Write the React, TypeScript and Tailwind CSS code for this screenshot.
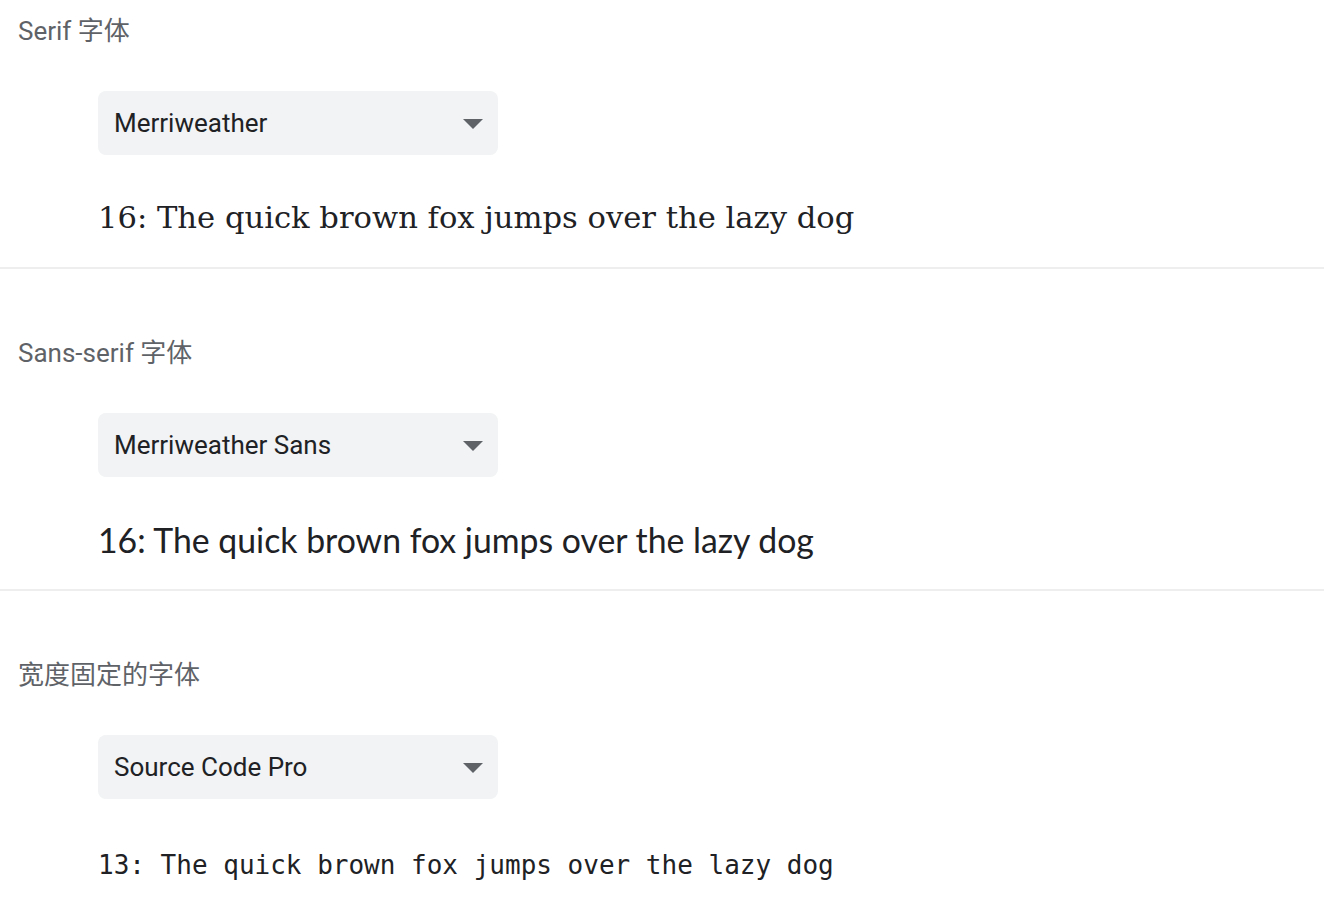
import React from 'react';

interface FontSectionProps {
  label: string;
  value: string;
  sample: string;
  sampleClass: string;
  first?: boolean;
  last?: boolean;
}

const Dropdown: React.FC<{ value: string }> = ({ value }) => (
  <div className="ml-[98px] w-[400px] h-[64px] rounded-lg bg-[#f1f3f4] flex items-center justify-between pl-[16px] pr-[15px]">
    <span className="text-[26px] text-[#202124] font-['Roboto',sans-serif]">{value}</span>
    <svg width="20" height="10" viewBox="0 0 20 10" className="mt-[1px]">
      <path d="M0 0 L20 0 L10 10 Z" fill="#5f6368" />
    </svg>
  </div>
);

const FontSection: React.FC<FontSectionProps> = ({ label, value, sample, sampleClass, first, last }) => (
  <div className={first ? '' : 'pt-[53px]'}>
    <div className="h-[62px] flex items-center pl-[18px] text-[26px] text-[#5f6368] font-['Roboto','Noto_Sans_CJK_SC',sans-serif]">
      {label}
    </div>
    <div className="mt-[29px]">
      <Dropdown value={value} />
    </div>
    <div className={`ml-[98px] h-[40px] flex items-center text-[#202124] whitespace-nowrap ${sampleClass}`}>
      {sample}
    </div>
    {!last && <div className="mt-[29px] h-[2px] bg-[#eeeeee]" />}
  </div>
);

export default function App() {
  return (
    <div className="w-[1324px] h-[908px] bg-white overflow-hidden">
      <FontSection
        first
        label="Serif 字体"
        value="Merriweather"
        sample="16: The quick brown fox jumps over the lazy dog"
        sampleClass="mt-[43px] font-['DejaVu_Serif',serif] text-[30.6px]"
      />
      <FontSection
        label="Sans-serif 字体"
        value="Merriweather Sans"
        sample="16: The quick brown fox jumps over the lazy dog"
        sampleClass="mt-[43px] font-['Lato',sans-serif] text-[33.8px]"
      />
      <FontSection
        last
        label="宽度固定的字体"
        value="Source Code Pro"
        sample="13: The quick brown fox jumps over the lazy dog"
        sampleClass="mt-[46px] font-['DejaVu_Sans_Mono',monospace] text-[26px]"
      />
    </div>
  );
}
